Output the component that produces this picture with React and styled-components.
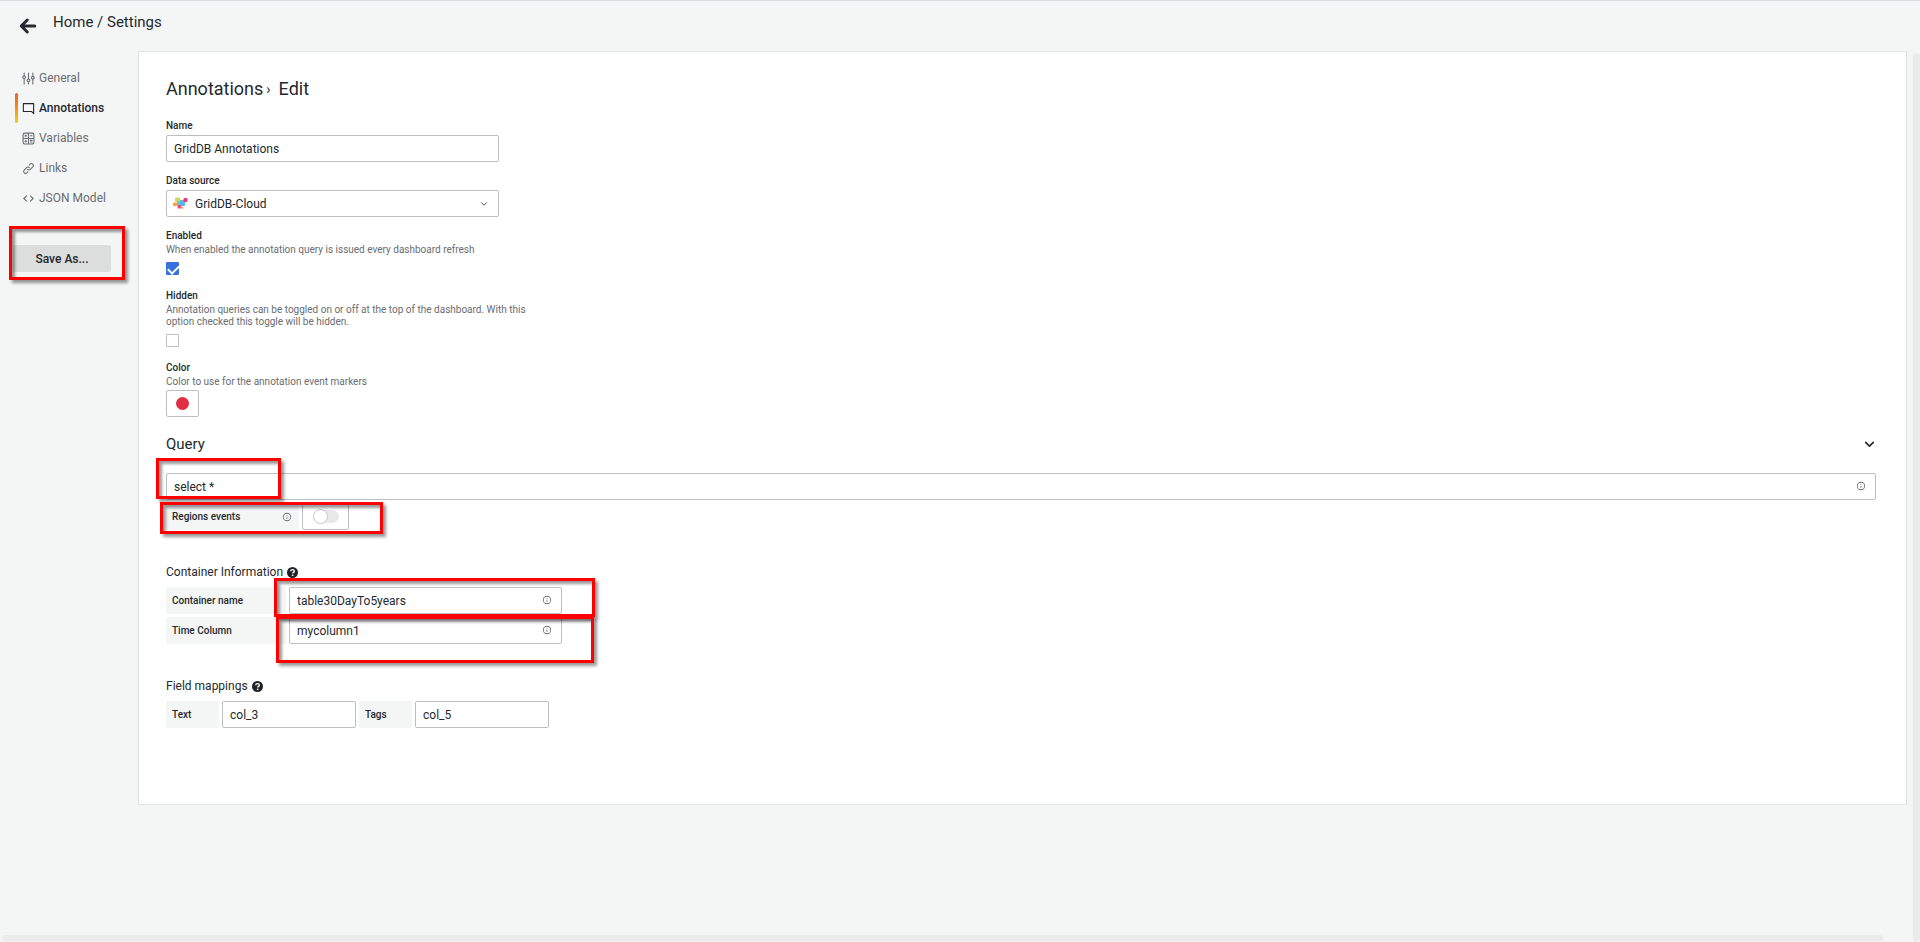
import React, { useState } from "react";
// styled component
import styled, { createGlobalStyle, css } from "styled-components";

// icon paths on a 24px grid
const ICONS = {
  link: "M10,17.55,8.23,19.27a2.47,2.47,0,0,1-3.5-3.5l4.54-4.55a2.46,2.46,0,0,1,3.39-.09l.12.1a1,1,0,0,0,1.4-1.43A2.75,2.75,0,0,0,14,9.59a4.46,4.46,0,0,0-6.09.22L3.31,14.36a4.48,4.48,0,0,0,6.33,6.33L11.37,19A1,1,0,0,0,10,17.55ZM20.69,3.31a4.49,4.49,0,0,0-6.33,0L12.63,5A1,1,0,0,0,14,6.45l1.73-1.72a2.47,2.47,0,0,1,3.5,3.5l-4.54,4.55a2.46,2.46,0,0,1-3.39.09l-.12-.1a1,1,0,0,0-1.4,1.43,2.75,2.75,0,0,0,.23.21,4.47,4.47,0,0,0,6.09-.22l4.55-4.55A4.49,4.49,0,0,0,20.69,3.31Z",
  info: "M12,2A10,10,0,1,0,22,12,10,10,0,0,0,12,2Zm0,18a8,8,0,1,1,8-8A8,8,0,0,1,12,20Zm0-8.5a1,1,0,0,0-1,1v3a1,1,0,0,0,2,0v-3A1,1,0,0,0,12,11.5Zm0-4a1.25,1.25,0,1,0,1.25,1.25A1.25,1.25,0,0,0,12,7.5Z",
};

const Icon = ({ name, size = 13 }) => (
  <svg width={size} height={size} viewBox="0 0 24 24" fill="currentColor" aria-hidden="true">
    <path d={ICONS[name]} />
  </svg>
);

const LineIcon = ({ d, size = 13, width = 2 }) => (
  <svg
    width={size}
    height={size}
    viewBox="0 0 24 24"
    fill="none"
    stroke="currentColor"
    strokeWidth={width}
    strokeLinecap="round"
    strokeLinejoin="round"
    aria-hidden="true"
  >
    <path d={d} />
  </svg>
);

const HelpIcon = () => (
  <svg width="11" height="11" viewBox="0 0 24 24" aria-hidden="true">
    <circle cx="12" cy="12" r="12" fill="#1f2228" />
    <path
      d="M8 9.2C8.3 6.6 10 5.6 12 5.6c2.3 0 4 1.3 4 3.4 0 2.6-3.6 2.8-3.6 5.2"
      fill="none"
      stroke="#fff"
      strokeWidth="3"
    />
    <circle cx="12.3" cy="18" r="1.9" fill="#fff" />
  </svg>
);

const GridDbLogo = () => (
  <svg width="15" height="13" viewBox="0 0 15 13" aria-hidden="true">
    <rect x="2" y="0.500" width="5" height="4.500" rx="1" fill="#c9dd4e" />
    <rect x="4" y="4" width="5" height="5" rx="1" fill="#74c2cf" />
    <rect x="7" y="3" width="5" height="6" rx="1" fill="#55b9e8" />
    <rect x="10.500" y="1" width="4" height="4" rx="1" fill="#ee3a7b" />
    <rect x="0" y="5.500" width="4" height="3.500" rx="1" fill="#f9a23a" />
    <rect x="4.500" y="8" width="3.500" height="3.500" rx="1" fill="#e8478a" />
    <rect x="8" y="9.500" width="2.500" height="2.500" rx="1" fill="#f9b45c" />
  </svg>
);

const SLIDERS =
  "M4 2v5M4 12v10M12 2v11M12 18v4M20 2v6M20 13v9M4 7a2.500 2.500 0 1 0 .01 0M12 13a2.500 2.500 0 1 0 .01 0M20 8a2.500 2.500 0 1 0 .01 0";
const COMMENT = "M2.500 3h19v18.500l-4-4h-15z";
const CALCULATOR =
  "M5 2h14a3 3 0 0 1 3 3v14a3 3 0 0 1-3 3H5a3 3 0 0 1-3-3V5a3 3 0 0 1 3-3zM12 2v20M2 12h20M5.500 7h3M7 5.500v3M15.500 7h3M5.500 17h3M7 15.500v3M15.500 15.500h3M15.500 18.500h3";

const NAV_ITEMS = [
  { label: "General", icon: <LineIcon d={SLIDERS} /> },
  { label: "Annotations", icon: <LineIcon d={COMMENT} /> , active: true },
  { label: "Variables", icon: <LineIcon d={CALCULATOR} /> },
  { label: "Links", icon: <Icon name="link" /> },
  { label: "JSON Model", icon: <LineIcon d="M8.500 7l-5 5 5 5M15.500 7l5 5-5 5" /> },
];

const App = () => {
  const [enabled, setEnabled] = useState(true); // annotation query enabled
  const [hidden, setHidden] = useState(false); // toggle hidden on the dashboard
  const [regions, setRegions] = useState(false); // regions events switch

  return (
    <Page>
      <GlobalStyle />
      <Header>
        <BackButton type="button" aria-label="Go back">
          <LineIcon d="M21 12H4M11 4l-8 8 8 8" size={18} width={4} />
        </BackButton>
        <PageTitle>Home / Settings</PageTitle>
      </Header>

      <Body>
        <ScrollArea>
          <Columns>
            {/* side menu */}
            <Sidebar>
              <nav>
                {NAV_ITEMS.map((item) => (
                  <NavLink href="#" key={item.label} $active={item.active}>
                    {item.icon}
                    {item.label}
                  </NavLink>
                ))}
              </nav>
              <SaveArea>
                <SaveButton type="button">Save As...</SaveButton>
                <Highlight $top={-19} $right={-14} $bottom={-8} $left={-4} />
              </SaveArea>
            </Sidebar>

            {/* annotation form */}
            <Panel>
              <Heading>
                Annotations <Separator>›</Separator> Edit
              </Heading>

              <Field>
                <Label htmlFor="name">Name</Label>
                <TextInput id="name" defaultValue="GridDB Annotations" />
              </Field>

              <Field>
                <Label htmlFor="source">Data source</Label>
                <SelectBox>
                  <GridDbLogo />
                  <Select id="source">
                    <option>GridDB-Cloud</option>
                  </Select>
                  <LineIcon d="M6 9l6 6 6-6" size={10} width={2} />
                </SelectBox>
              </Field>

              <Field>
                <Label htmlFor="enabled">Enabled</Label>
                <Description>
                  When enabled the annotation query is issued every dashboard refresh
                </Description>
                <Checkbox
                  id="enabled"
                  type="checkbox"
                  checked={enabled}
                  onChange={() => setEnabled((state) => !state)}
                />
              </Field>

              <Field>
                <Label htmlFor="hidden">Hidden</Label>
                <Description>
                  Annotation queries can be toggled on or off at the top of the dashboard. With
                  this option checked this toggle will be hidden.
                </Description>
                <Checkbox
                  id="hidden"
                  type="checkbox"
                  checked={hidden}
                  onChange={() => setHidden((state) => !state)}
                />
              </Field>

              <Field>
                <Label htmlFor="color">Color</Label>
                <Description>Color to use for the annotation event markers</Description>
                <ColorButton id="color" type="button" />
              </Field>

              <QueryHeader>
                <QueryTitle>Query</QueryTitle>
                <CollapseButton type="button" aria-label="Collapse query">
                  <LineIcon d="M5 8l7 7 7-7" size={13} width={3} />
                </CollapseButton>
              </QueryHeader>

              <Rows>
                <InputBox $grow>
                  <TextInput aria-label="Query" defaultValue="select *" />
                  <Icon name="info" size={10} />
                  <QueryHighlight $top={-15} $right={0} $bottom={1} $left={-10} />
                </InputBox>
                <RegionsRow>
                  <InlineLabel htmlFor="regions" $width={133}>
                    Regions events
                    <Icon name="info" size={10} />
                  </InlineLabel>
                  <SwitchBox>
                    <Switch
                      id="regions"
                      type="checkbox"
                      role="switch"
                      checked={regions}
                      onChange={() => setRegions((state) => !state)}
                    />
                  </SwitchBox>
                  <Highlight $top={-1} $right={-34} $bottom={-4} $left={-6} />
                </RegionsRow>
              </Rows>

              <GroupTitle>
                Container Information <HelpIcon />
              </GroupTitle>
              <Rows>
                <Row>
                  <InlineLabel htmlFor="container" $width={120}>
                    Container name
                  </InlineLabel>
                  <InputBox $width={273}>
                    <TextInput id="container" defaultValue="table30DayTo5years" />
                    <Icon name="info" size={10} />
                    <Highlight $top={-9} $right={-33} $bottom={-3} $left={-15} />
                  </InputBox>
                </Row>
                <Row>
                  <InlineLabel htmlFor="time" $width={120}>
                    Time Column
                  </InlineLabel>
                  <InputBox $width={273}>
                    <TextInput id="time" defaultValue="mycolumn1" />
                    <Icon name="info" size={10} />
                    <Highlight $top={-1} $right={-32} $bottom={-19} $left={-13} />
                  </InputBox>
                </Row>
              </Rows>

              <GroupTitle>
                Field mappings <HelpIcon />
              </GroupTitle>
              <Row>
                <InlineLabel htmlFor="text" $width={53}>
                  Text
                </InlineLabel>
                <InputBox $width={134}>
                  <TextInput id="text" defaultValue="col_3" />
                </InputBox>
                <InlineLabel htmlFor="tags" $width={53}>
                  Tags
                </InlineLabel>
                <InputBox $width={134}>
                  <TextInput id="tags" defaultValue="col_5" />
                </InputBox>
              </Row>
            </Panel>
          </Columns>
          <HorizontalTrack />
        </ScrollArea>
        <VerticalTrack />
      </Body>
    </Page>
  );
};

export default App;

const GlobalStyle = createGlobalStyle`
  * {
    box-sizing: border-box;
  }

  body {
    margin: 0;
    background: #f4f6f5;
    color: #24292e;
    font: 12px/16px Roboto, sans-serif;
  }

  button, input, select {
    font: inherit;
    color: inherit;
  }

  svg {
    flex: none;
    display: block;
  }
`;

const Page = styled.div`
  display: flex;
  flex-direction: column;
  min-height: 100vh;
  background: #f4f6f5;
  border-top: 1px solid #d8dae0;
`;

const Header = styled.header`
  display: flex;
  align-items: flex-start;
  gap: 16px;
  height: 50px;
  padding: 11px 19px;
`;

const BackButton = styled.button`
  margin-top: 5px;
  padding: 0;
  border: 0;
  background: none;
`;

const PageTitle = styled.h1`
  margin: 0;
  font-size: 15px;
  font-weight: 400;
  line-height: 20px;
`;

const Body = styled.div`
  display: flex;
  flex: 1;
  gap: 6px;
`;

const ScrollArea = styled.div`
  display: flex;
  flex: 1;
  flex-direction: column;
  justify-content: space-between;
`;

const Columns = styled.div`
  display: flex;
  align-items: flex-start;
`;

const track = css`
  background: #eaeceb;
  border-radius: 4px;
`;

const VerticalTrack = styled.div`
  ${track}
  width: 7px;
  margin-top: 2px;
`;

const HorizontalTrack = styled.div`
  ${track}
  height: 6px;
  margin: 0 24px 1px 2px;
`;

const Sidebar = styled.aside`
  width: 138px;
  padding: 12px 12px 0 15px;
`;

const NavLink = styled.a`
  position: relative;
  display: flex;
  align-items: center;
  gap: 4px;
  height: 30px;
  padding-left: 7px;
  color: #6a6d71;
  text-decoration: none;

  ${({ $active }) =>
    $active &&
    css`
      color: #24292e;
      font-weight: 500;

      &::before {
        content: "";
        position: absolute;
        inset: 0 auto 0 0;
        width: 3px;
        border-radius: 2px;
        background: linear-gradient(#f05a28, #fbca0a);
      }
    `}
`;

const SaveArea = styled.div`
  position: relative;
  width: 98px;
  margin: 32px 0 0 -2px;
`;

const SaveButton = styled.button`
  display: block;
  width: 100%;
  height: 27px;
  border: 0;
  border-radius: 2px;
  background: #dcdedd;
  font-weight: 500;
`;

// red callout frame drawn over a part of the form
const Highlight = styled.div`
  position: absolute;
  top: ${({ $top }) => $top}px;
  right: ${({ $right }) => $right}px;
  bottom: ${({ $bottom }) => $bottom}px;
  left: ${({ $left }) => $left}px;
  z-index: 1;
  border: 3px solid #ff0000;
  box-shadow: 3px 3px 3px rgba(0, 0, 0, 0.4), inset 3px 3px 3px rgba(0, 0, 0, 0.4);
  pointer-events: none;
`;

const QueryHighlight = styled(Highlight)`
  right: auto;
  width: 125px;
`;

const Panel = styled.main`
  flex: 1;
  padding: 25px 30px 76px 27px;
  border: 1px solid #e2e4e4;
  background: #fff;
`;

const Heading = styled.h2`
  display: flex;
  gap: 3px;
  margin: 0 0 18px;
  font-size: 18px;
  font-weight: 400;
  line-height: 24px;
`;

const Separator = styled.span`
  margin-right: 5px;
  font-size: 14px;
`;

const Field = styled.div`
  max-width: 374px;
  margin-bottom: 12px;

  > input:not([type="checkbox"]) {
    width: 333px;
  }
`;

const Label = styled.label`
  display: block;
  margin-bottom: 2px;
  font-size: 10px;
  font-weight: 500;
  line-height: 14px;
`;

const Description = styled.p`
  margin: -1px 0 2px;
  color: #6a6d71;
  font-size: 10px;
  line-height: 12px;
`;

const box = css`
  height: 27px;
  border: 1px solid #bdbec2;
  border-radius: 2px;
  background: #fff;
`;

const TextInput = styled.input`
  ${box}
  display: block;
  width: 100%;
  padding: 0 7px;
`;

const InputBox = styled.div`
  position: relative;
  width: ${({ $grow, $width }) => ($grow ? "100%" : `${$width}px`)};

  > svg {
    position: absolute;
    top: 8px;
    right: 10px;
    color: #6a6d71;
  }
`;

const SelectBox = styled.div`
  ${box}
  display: flex;
  align-items: center;
  gap: 7px;
  width: 333px;
  padding: 0 9px 0 6px;
`;

const Select = styled.select`
  flex: 1;
  padding: 0;
  border: 0;
  background: none;
  appearance: none;
`;

const Checkbox = styled.input`
  display: block;
  position: relative;
  width: 13px;
  height: 13px;
  margin: 6px 0 14px;
  border: 1px solid #bdbec2;
  border-radius: 1px;
  background: #fff;
  appearance: none;

  &:checked {
    border-color: #3871dc;
    background: #3871dc;
  }

  &:checked::after {
    content: "";
    position: absolute;
    top: 0;
    left: 3px;
    width: 5px;
    height: 9px;
    border: solid #fff;
    border-width: 0 2px 2px 0;
    transform: rotate(45deg);
  }
`;

const ColorButton = styled.button`
  ${box}
  display: grid;
  place-items: center;
  width: 33px;
  padding: 0;

  &::before {
    content: "";
    width: 13px;
    height: 13px;
    border-radius: 50%;
    background: #e02f44;
  }
`;

const QueryHeader = styled.div`
  display: flex;
  align-items: center;
  justify-content: space-between;
  margin: 17px 0 19px;
`;

const QueryTitle = styled.h3`
  margin: 0;
  font-size: 15px;
  font-weight: 400;
  line-height: 20px;
`;

const CollapseButton = styled.button`
  padding: 0;
  border: 0;
  background: none;
`;

const Rows = styled.div`
  display: flex;
  flex-direction: column;
  align-items: flex-start;
  gap: 3px;
`;

const Row = styled.div`
  display: flex;
  gap: 3px;
`;

const RegionsRow = styled(Row)`
  position: relative;
`;

const InlineLabel = styled.label`
  display: flex;
  align-items: center;
  justify-content: space-between;
  width: ${({ $width }) => $width}px;
  height: 27px;
  padding: 0 7px 0 6px;
  border-radius: 2px;
  background: #f4f6f5;
  font-size: 10px;
  font-weight: 500;

  svg {
    color: #6a6d71;
  }
`;

const SwitchBox = styled.div`
  ${box}
  display: grid;
  place-items: center;
  width: 47px;
`;

const Switch = styled.input`
  display: flex;
  align-items: center;
  width: 26px;
  height: 13px;
  margin: 0;
  border-radius: 7px;
  background: #e9e9ea;
  appearance: none;

  &::before {
    content: "";
    width: 13px;
    height: 13px;
    border: 1px solid #c6c7ca;
    border-radius: 50%;
    background: #fff;
  }

  &:checked {
    justify-content: flex-end;
    background: #3871dc;
  }
`;

const GroupTitle = styled.h4`
  display: flex;
  align-items: center;
  gap: 4px;
  margin: 34px 0 7px;
  font-size: 12px;
  font-weight: 400;
  line-height: 16px;
`;
